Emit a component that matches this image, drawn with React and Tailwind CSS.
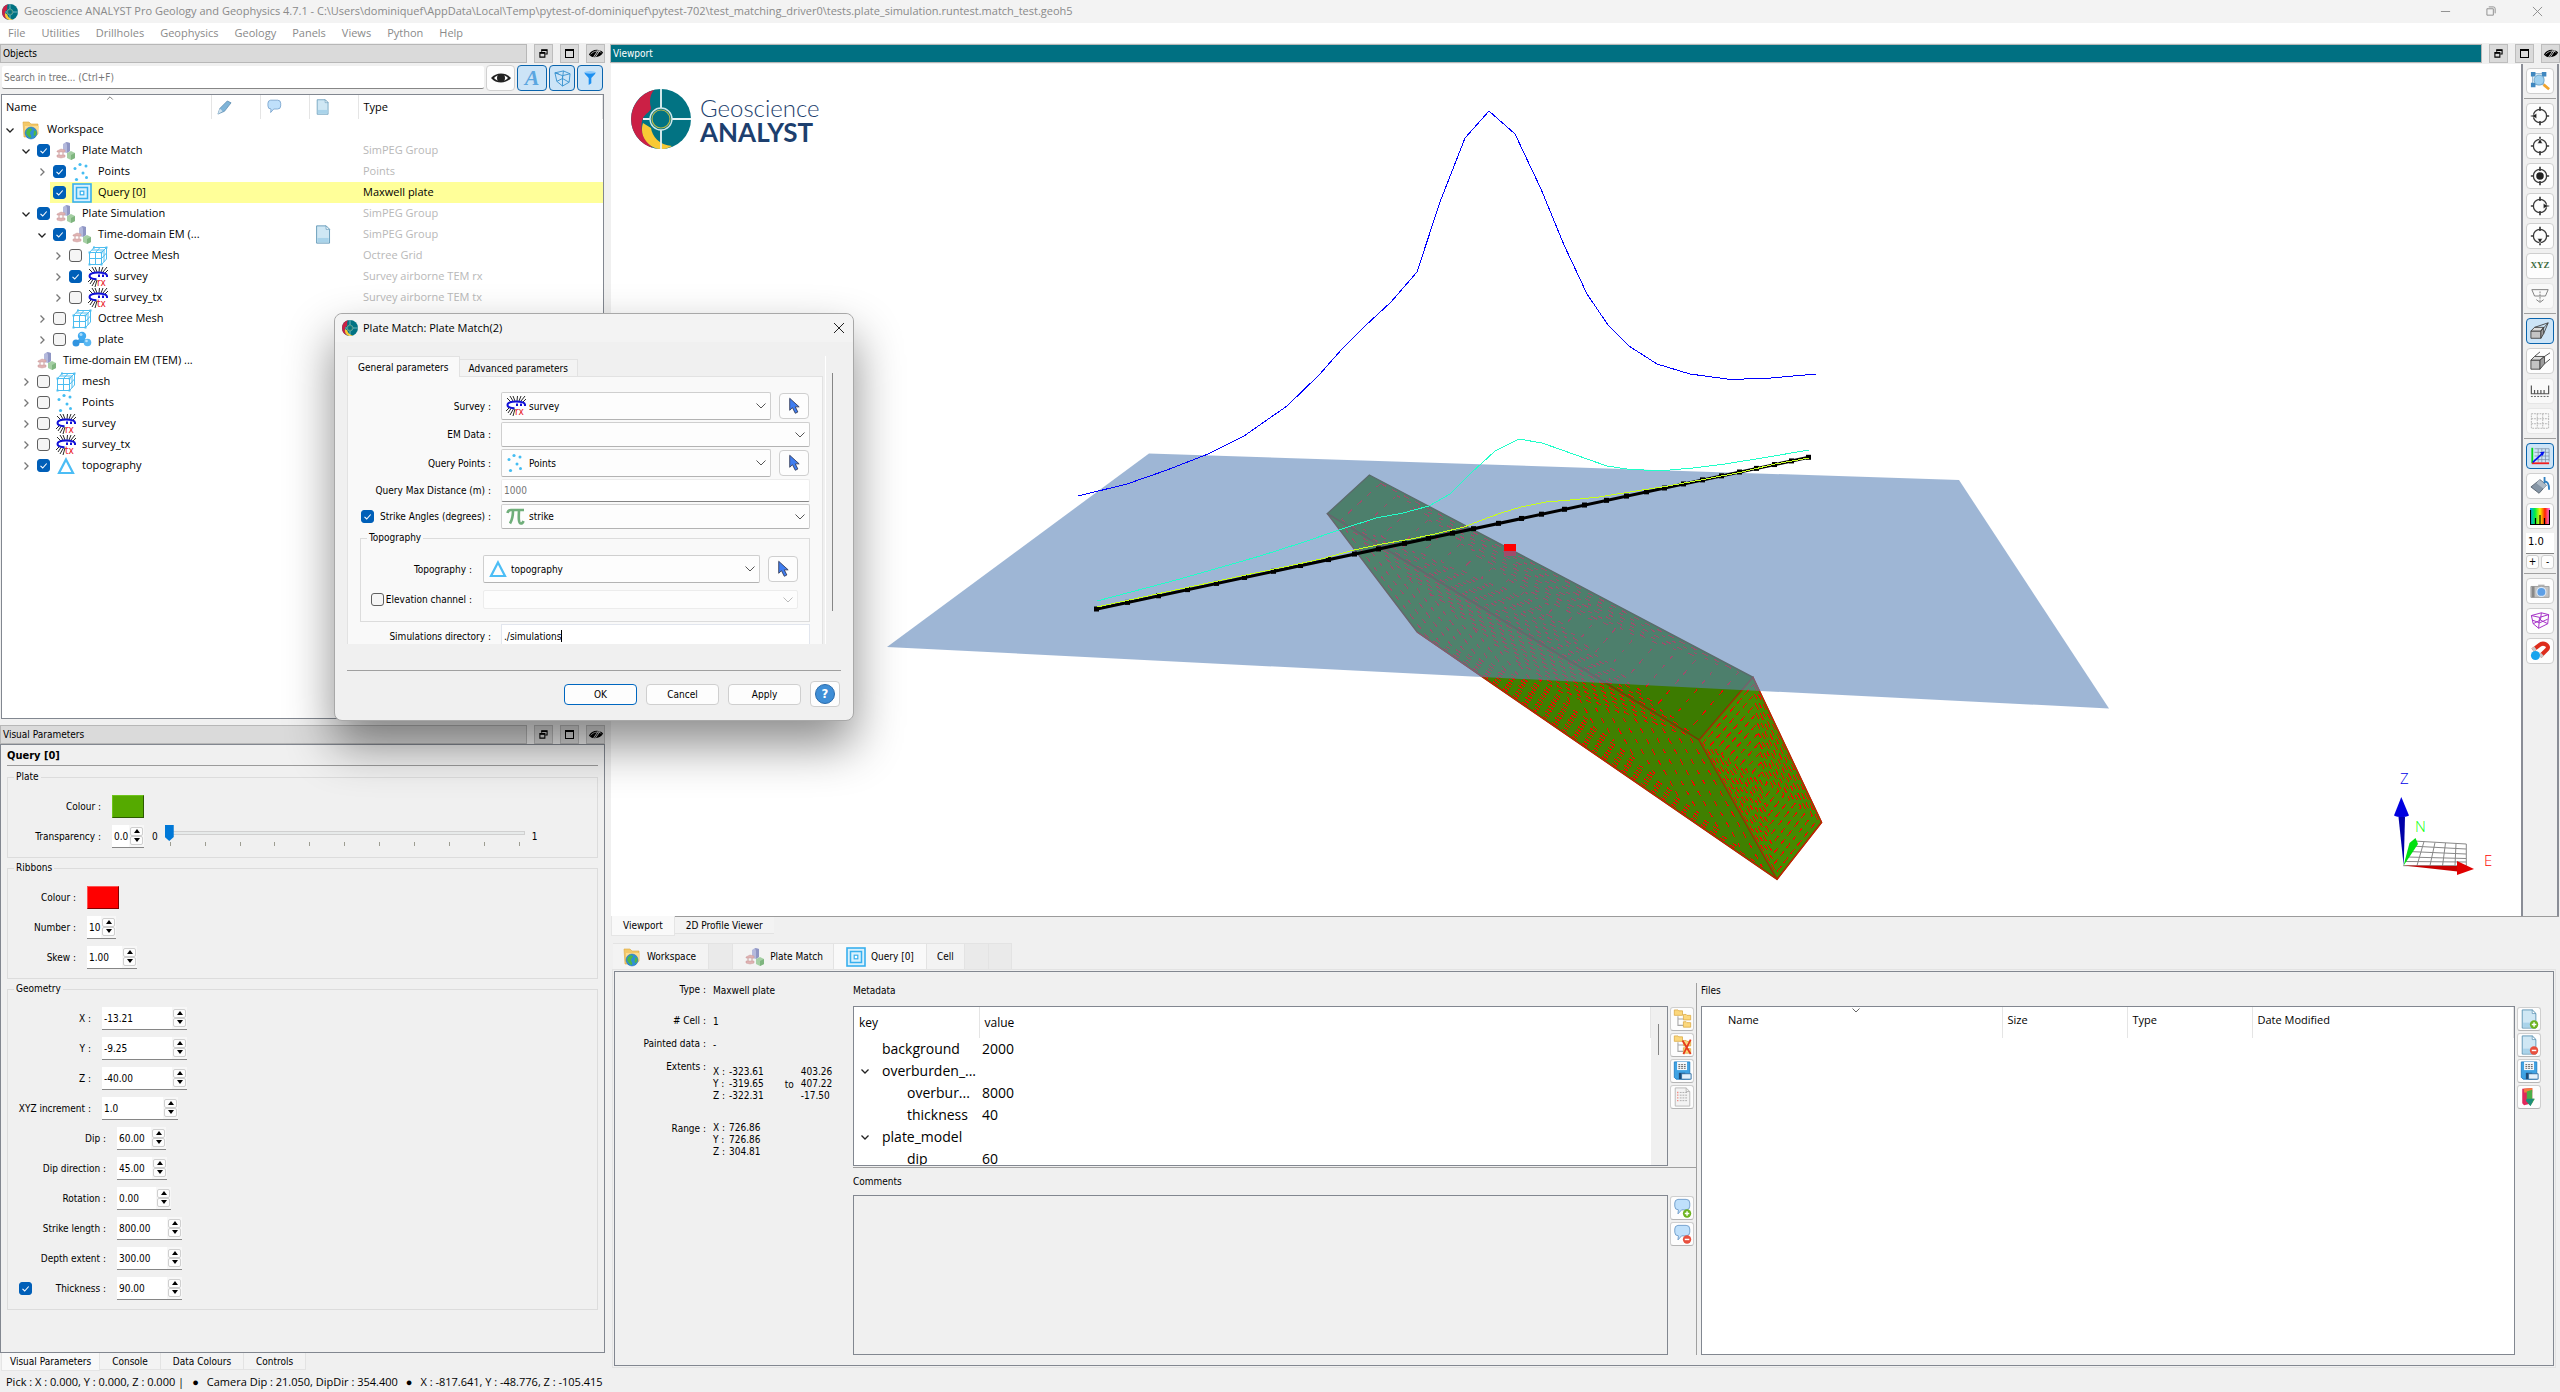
import clsx from "clsx";

const segoe = "font-['Open_Sans','Noto_Sans',sans-serif]";
const tahoma = "font-['DejaVu_Sans_Condensed','DejaVu_Sans',sans-serif]";

/* ---------- icons ---------- */

const AppLogo = ({ className }) => (
  <svg viewBox="0 0 60 60" className={className}>
    <circle cx="30" cy="30" r="30" fill="#027383" />
    <path d="M23 1A30 30 0 0 0 22 59C12 50 8 40 12 29 14 25 20 22 20 19 18 12 19 6 23 1Z" fill="#cb2045" />
    <path d="M12 34C8 46 16 56 24 59 30 61 36 60 41 57 28 56 21 47 20 39Z" fill="#f9c935" />
    <path d="M30 0V19M30 41V60M41 30H60M12 30H19" stroke="#e8f4f5" strokeWidth="1.8" />
    <circle cx="30" cy="30" r="11" fill="none" stroke="#cfe8ea" strokeWidth="1.4" />
    <circle cx="30" cy="30" r="9" fill="#027383" stroke="#b6b74a" strokeWidth="1.2" />
  </svg>
);

const WorkspaceIcon = () => (
  <svg viewBox="0 0 20 20" className="size-5">
    <path d="M2 2h6l2 2h7v10l-3 3H3z" fill="#f3c868" stroke="#dba83f" strokeWidth=".6" />
    <path d="M4 6h14l-2 10H4z" fill="#fbdc92" />
    <circle cx="10" cy="13" r="6" fill="#2f8fd6" stroke="#1d6cab" strokeWidth=".5" />
    <path d="M6 10c2-2 4-2 5-1 0 2-2 2-2 4s2 2 1 5c-2 0-4-3-5-5zM13 11c1-1 2 0 2.500 1 0 2-1 4-2.500 4-1-2 0-3 0-5z" fill="#4db748" />
  </svg>
);

const SimpegIcon = () => (
  <svg viewBox="0 0 20 20" className="size-5">
    <path d="M7 3l3-2 4 1v8l-3 2-4-1z" fill="#b4b9dc" />
    <path d="M10 1l4 1v8l-3 2V4z" fill="#8f96c4" />
    <path d="M1 10l4-2 4 1v2H1zM1 14h8v2l-4 1-4-1z" fill="#e0b3b3" stroke="#c99a9a" strokeWidth=".5" />
    <path d="M3 11v3M7 11v3" stroke="#c99a9a" />
    <path d="M11 12l4-2 4 2v5l-4 2-4-2z" fill="#a5cfa4" />
    <path d="M15 14l4-2v5l-4 2z" fill="#7fb57f" />
  </svg>
);

const PointsIcon = () => (
  <svg viewBox="0 0 20 20" className="size-5" fill="#45bdf2">
    <circle cx="8" cy="2.500" r="1.600" />
    <circle cx="14" cy="4" r="1.500" />
    <circle cx="3" cy="6.500" r="1.500" />
    <circle cx="11" cy="11" r="1.500" />
    <circle cx="14.500" cy="15.500" r="1.500" />
    <circle cx="4.500" cy="17.500" r="1.600" />
  </svg>
);

const PlateIcon = () => (
  <svg viewBox="0 0 20 20" className="size-5" fill="none">
    <rect x="1" y="1" width="18" height="18" fill="#d9f1fd" stroke="#38b0ee" strokeWidth="1.600" />
    <rect x="4.500" y="4.500" width="11" height="11" stroke="#38b0ee" strokeWidth="1.500" />
    <rect x="8.200" y="8.200" width="3.600" height="3.600" fill="#fff" stroke="#38b0ee" strokeWidth="1.200" />
  </svg>
);

const OctreeIcon = () => (
  <svg viewBox="0 0 20 20" className="size-5" fill="none" stroke="#4cbdf0" strokeWidth="1">
    <path d="M1.500 6.500h12v12h-12zM6 1.500h12.500l-5 5M1.500 6.500l4.500-5M18.500 1.500v11.500l-5 5.500M7.500 6.500v12M1.500 12.500h12l5-5.500M12 1.500l-4.500 5M16 4v12M4 4h12" />
    <path d="M.5 5.500h2v2h-2zM12.500 5.500h2v2h-2zM.5 17.500h2v2h-2zM12.500 17.500h2v2h-2zM17.500 .5h2v2h-2zM5 .5h2v2H5z" fill="#4cbdf0" stroke="none" />
  </svg>
);

const SurveyIcon = ({ tag }) => (
  <svg viewBox="0 0 20 20" className="size-5" fill="none">
    <path d="M7 5L4 0M9 5L7 0M11 5l.5-5M13 5l2-5M15 5l4-5M17 6l3-3M5 6L1 2M6 11l-4 6M8 12l-4 7M9 13l-2 7M4 11l-4 4" stroke="#111" strokeWidth=".9" />
    <path d="M19 10V8.500C18.500 6.500 15 5.500 10 5.500S1.500 6.500 1.500 9s3 3 7 3.200M11 7.500v2.500M15 7.500v2.500" stroke="#1010d8" strokeWidth="2" />
    <text x="9" y="19" fontSize="10" fill="#e8141c" fontFamily="DejaVu Sans Condensed">{tag}</text>
  </svg>
);

const BlobIcon = () => (
  <svg viewBox="0 0 20 20" className="size-5">
    <path d="M3 13l7-7 6 7z" fill="#3d9fe2" />
    <circle cx="10" cy="6" r="4.200" fill="#41aaf0" />
    <circle cx="4" cy="13" r="3.500" fill="#3194e0" />
    <circle cx="15.500" cy="12.500" r="3.800" fill="#58b7f3" />
    <circle cx="9" cy="4.500" r="1.500" fill="#a6dbfb" />
    <circle cx="14.500" cy="11" r="1.300" fill="#b8e3fc" />
  </svg>
);

const TriangleIcon = () => (
  <svg viewBox="0 0 20 20" className="size-5" fill="none">
    <path d="M10 3.500L17 17H3z" stroke="#4cbdf5" strokeWidth="2.200" />
  </svg>
);

const PiIcon = () => (
  <svg viewBox="0 0 20 20" className="size-5" fill="none" stroke="#6fae7a">
    <path d="M1.500 6C2 3.500 3 3 5 3h13" strokeWidth="2.600" />
    <path d="M7 3.500c0 5-.5 9-3 13M13 3.500c-.3 6-.8 13 2 13 1.500 0 2-1 2.500-2.500" strokeWidth="2.600" />
  </svg>
);

const icons = {
  workspace: <WorkspaceIcon />,
  simpeg: <SimpegIcon />,
  points: <PointsIcon />,
  plate: <PlateIcon />,
  octree: <OctreeIcon />,
  rx: <SurveyIcon tag="rx" />,
  tx: <SurveyIcon tag="tx" />,
  blob: <BlobIcon />,
  triangle: <TriangleIcon />,
  pi: <PiIcon />,
};

const Chevron = ({ open, className }) => (
  <svg viewBox="0 0 10 10" className={clsx("size-[10px]", className)} fill="none">
    <path d={open ? "M1.500 3.500L5 7l3.500-3.500" : "M3.500 1.500L7 5 3.500 8.500"} stroke={open ? "#222" : "#777"} strokeWidth="1.300" />
  </svg>
);

const DocIcon = ({ badge, className }) => (
  <svg viewBox="0 0 20 22" className={className}>
    <path d="M2 1h11l4 4v16H2z" fill="#cfe7f4" stroke="#5b93b4" strokeWidth="1" />
    <path d="M3 15h13v5H3z" fill="#a9d3ea" />
    <path d="M13 1v4h4z" fill="#fff" stroke="#5b93b4" strokeWidth=".8" />
    {badge && <Badge kind={badge} />}
  </svg>
);

const CommentIcon = ({ badge, className }) => (
  <svg viewBox="0 0 20 22" className={className}>
    <path d="M5 1.500h9a4 4 0 0 1 4 4V9a4 4 0 0 1-4 4H9l-4 4.500.5-4.500A4 4 0 0 1 1.500 9V5.500a4 4 0 0 1 3.500-4z" fill="#bfe0fb" stroke="#6e9cc9" strokeWidth="1" />
    {badge && <Badge kind={badge} />}
  </svg>
);

const Badge = ({ kind }) => (
  <g>
    <circle cx="15" cy="17" r="4.600" fill={kind === "add" ? "#6db31f" : "#e8503e"} />
    <path d={kind === "add" ? "M12.500 17h5M15 14.500v5" : "M12.500 17h5"} stroke="#fff" strokeWidth="1.600" />
  </g>
);

const SaveIcon = () => (
  <svg viewBox="0 0 20 22" className="h-[20px] w-[19px]">
    <path d="M1 1h17v19H3l-2-2z" fill="#3fa3e4" stroke="#2380c4" />
    <path d="M4 1h11v9H4z" fill="#f5f9fc" />
    <path d="M5.500 4h8M5.500 6h8M5.500 8h8" stroke="#555" strokeDasharray="2 1" />
    <path d="M6 13h7v7H6z" fill="#1f4c77" />
    <path d="M9 14h10.500v6H9z" fill="#e4f1fb" stroke="#2f6fa5" />
  </svg>
);

const FolderTreeIcon = ({ removed }) => (
  <svg viewBox="0 0 20 22" className="h-[20px] w-[19px]" fill="#fbd77c" stroke="#d9a53c" strokeWidth=".8">
    <path d="M5 8v10h6M5 11h6" fill="none" stroke="#a8a8a8" strokeWidth="1.200" />
    <path d="M1 1h4l1 1h4v5H1zM11 6h3l1 1h4v5h-8zM11 14h3l1 1h4v5h-8z" />
    {removed && <path d="M10 6l9 15M19 5l-8 16" fill="none" stroke="#e63a1e" strokeWidth="2" />}
  </svg>
);

const NotesIcon = () => (
  <svg viewBox="0 0 20 22" className="h-[20px] w-[19px]" fill="none">
    <path d="M2 1h12l4 4v16H2z" fill="#f3f3f3" stroke="#b5b5b5" />
    <path d="M14 1v4h4" stroke="#b5b5b5" />
    <path d="M7 6h8M7 9h8M7 12h8M7 15h8" stroke="#a8a8a8" strokeDasharray="2 1" />
    <path d="M4 6h1.500M4 9h1.500M4 12h1.500M4 15h1.500" stroke="#f08a80" strokeWidth="1.500" />
  </svg>
);

const ImportIcon = () => (
  <svg viewBox="0 0 20 22" className="h-[20px] w-[19px]">
    <path d="M2 2l11-1v17L4 20 2 18z" fill="#e0285c" />
    <path d="M4 2l9-1v5H4z" fill="#f47b3c" />
    <path d="M7 5l6-2v10h3l-5 8-5-7h1z" fill="#4caf45" />
    <path d="M7 13h8l-4 8-5-6z" fill="#1c8d7b" />
  </svg>
);

const PickIcon = () => (
  <svg viewBox="0 0 14 20" className="h-[18px] w-[12px]">
    <path d="M2 1v14l3.200-3L8.500 18.500l3-1.500L8.500 11h4.500z" fill="#3f7df0" stroke="#333a55" strokeWidth="1" />
  </svg>
);

const Restore = () => (
  <svg viewBox="0 0 10 10" className="size-[9px]" fill="none" stroke="#000">
    <path d="M3 3V1h6v4.500H7" strokeWidth="1.200" />
    <path d="M1 4h5.500v5H1z" strokeWidth="1.200" />
    <path d="M3 1.500h6M1 4.500h5.500" strokeWidth="1.600" />
  </svg>
);

const EyeOff = () => (
  <svg viewBox="0 0 18 12" className="h-[11px] w-[16px]">
    <path d="M1 7C4 1 13 0 17 5 14 11 5 12 1 7z" fill="#000" />
    <path d="M3 7C6 3 12 2 15 5" stroke="#ddd" strokeWidth=".8" fill="none" />
    <path d="M5 12L13 0M7 12L15 0" stroke="#dadada" strokeWidth="1" />
  </svg>
);

/* ---------- shared controls ---------- */

const DockHeader = ({ title, active }) => (
  <div className="flex h-[19px] gap-[7px]">
    <div
      className={clsx(
        "flex flex-1 items-center border border-[#b7b7b7] pl-[2px] text-[10px]",
        active ? "bg-[#007082] text-white" : "bg-[#dadada] text-black"
      )}
    >
      {title}
    </div>
    {[<Restore />, <span className="size-[9px] border border-t-2 border-black" />, <EyeOff />].map((icon, i) => (
      <button key={i} aria-label={["Float", "Maximize", "Hide"][i]} className="flex w-[19px] items-center justify-center border border-[#bdbdbd] bg-[#dadada]">
        {icon}
      </button>
    ))}
  </div>
);

const Check = ({ checked, label, id }) => (
  <span className="relative block size-[13px] shrink-0">
    <input
      id={id}
      type="checkbox"
      defaultChecked={checked}
      aria-label={label}
      className="peer block size-[13px] appearance-none rounded-[3px] border border-[#5f5f5f] bg-[#f5f5f5] checked:border-[#005fb8] checked:bg-[#005fb8]"
    />
    <svg viewBox="0 0 13 13" className="pointer-events-none absolute inset-0 hidden peer-checked:block" fill="none">
      <path d="M3.500 6.800L5.700 9l4-4.500" stroke="#fff" strokeWidth="1.100" />
    </svg>
  </span>
);

const Spin = ({ id, value, width }) => (
  <div className={clsx("flex h-[23px] items-center border-b border-[#868686] bg-[#f7f7f7]", width)}>
    <input id={id} defaultValue={value} className="h-full min-w-0 flex-1 bg-white pt-px pl-[2px] text-[10px] outline-none" />
    <div className="flex w-[15px] flex-col px-px">
      {["M3 0L6 4H0z", "M0 0h6L3 4z"].map((d, i) => (
        <button key={i} aria-label={i ? "Decrease" : "Increase"} className="flex h-[9px] items-center justify-center rounded-[2px] border border-[#cfcfcf] bg-[#fdfdfd]">
          <svg viewBox="0 0 6 4" className="h-[4px] w-[6px]">
            <path d={d} />
          </svg>
        </button>
      ))}
    </div>
  </div>
);

const Group = ({ title, className, children }) => (
  <fieldset className={clsx("border border-[#dcdcdc]", className)}>
    <legend className="ml-[6px] h-[14px] px-[2px] text-[10px] leading-[14px]">{title}</legend>
    {children}
  </fieldset>
);

const Combo = ({ id, value, icon, disabled, className }) => (
  <div
    className={clsx(
      "flex items-center rounded-[2px] border bg-[#fdfdfd] pl-1",
      disabled ? "border-[#ececec]" : "border-[#cfcfcf] border-b-[#b3b3b3]",
      className
    )}
  >
    {icon && icons[icon]}
    <select id={id} disabled={disabled} className="h-full min-w-0 flex-1 appearance-none bg-transparent pl-[3px] text-[10px] outline-none">
      <option>{value}</option>
    </select>
    <svg viewBox="0 0 10 6" className="mr-1 h-[6px] w-[10px]" fill="none">
      <path d="M.5 .5L5 5 9.500 .5" stroke={disabled ? "#bbb" : "#555"} />
    </svg>
  </div>
);

const PickButton = () => (
  <button aria-label="Pick from viewport" className="flex h-[26px] w-[30px] items-center justify-center rounded border border-[#cfcfcf] bg-[#fdfdfd]">
    <PickIcon />
  </button>
);

const SideButton = ({ label, children }) => (
  <button aria-label={label} className="flex size-6 items-center justify-center rounded-[3px] border border-[#cfcfcf] border-b-[#b5b5b5] bg-[#fdfdfd]">
    {children}
  </button>
);

/* ---------- objects tree ---------- */

const tree = [
  { level: 0, open: true, icon: "workspace", name: "Workspace" },
  { level: 1, open: true, checked: true, icon: "simpeg", name: "Plate Match", type: "SimPEG Group" },
  { level: 2, open: false, checked: true, icon: "points", name: "Points", type: "Points" },
  { level: 2, checked: true, icon: "plate", name: "Query [0]", type: "Maxwell plate", selected: true },
  { level: 1, open: true, checked: true, icon: "simpeg", name: "Plate Simulation", type: "SimPEG Group" },
  { level: 2, open: true, checked: true, icon: "simpeg", name: "Time-domain EM (...", type: "SimPEG Group", doc: true },
  { level: 3, open: false, checked: false, icon: "octree", name: "Octree Mesh", type: "Octree Grid" },
  { level: 3, open: false, checked: true, icon: "rx", name: "survey", type: "Survey airborne TEM rx" },
  { level: 3, open: false, checked: false, icon: "tx", name: "survey_tx", type: "Survey airborne TEM tx" },
  { level: 2, open: false, checked: false, icon: "octree", name: "Octree Mesh" },
  { level: 2, open: false, checked: false, icon: "blob", name: "plate" },
  { level: 1, icon: "simpeg", name: "Time-domain EM (TEM) ..." },
  { level: 1, open: false, checked: false, icon: "octree", name: "mesh" },
  { level: 1, open: false, checked: false, icon: "points", name: "Points" },
  { level: 1, open: false, checked: false, icon: "rx", name: "survey" },
  { level: 1, open: false, checked: false, icon: "tx", name: "survey_tx" },
  { level: 1, open: false, checked: true, icon: "triangle", name: "topography" },
];

const indents = ["pl-0", "pl-4", "pl-8", "pl-12"];

const TreeRow = ({ row }) => (
  <tr className="h-[21px]">
    <td className={clsx("p-0", indents[row.level])}>
      <div className={clsx("flex h-[21px] items-center pl-[3px] whitespace-nowrap", row.selected && "ml-4 bg-[#ffff99]")}>
        {!row.selected && (
          <button aria-label="Expand" className="flex w-4 shrink-0 items-center">
            {row.open !== undefined && <Chevron open={row.open} />}
          </button>
        )}
        {row.checked !== undefined && (
          <span className="mr-[6px]">
            <Check checked={row.checked} label={row.name} />
          </span>
        )}
        {icons[row.icon]}
        <span className="ml-[6px]">{row.name}</span>
      </div>
    </td>
    <td className={clsx("p-0", row.selected && "bg-[#ffff99]")} />
    <td className={clsx("p-0", row.selected && "bg-[#ffff99]")} />
    <td className={clsx("p-0 pl-[5px]", row.selected && "bg-[#ffff99]")}>{row.doc && <DocIcon className="h-[19px] w-[19px]" />}</td>
    <td className={clsx("p-0 pl-[5px]", row.selected ? "bg-[#ffff99]" : "text-[#b8b8b8]")}>{row.type}</td>
  </tr>
);

const toggleStyle = "flex items-center justify-center rounded border border-[#0a64ad] bg-[#cce4f7]";

const ObjectsPanel = () => (
  <section className="flex min-h-0 flex-1 flex-col">
    <DockHeader title="Objects" />
    <div className="flex h-[28px] gap-[2px] px-[2px] pt-[2px]">
      <input
        aria-label="Search in tree"
        placeholder="Search in tree... (Ctrl+F)"
        className="mt-px h-[23px] min-w-0 flex-1 rounded-[2px] border-b border-[#868686] bg-white px-[2px] text-[10px] outline-none placeholder:text-[#757575]"
      />
      <button aria-label="Show visible" className="flex w-[29px] items-center justify-center rounded border border-[#d0d0d0] bg-[#fdfdfd]">
        <svg viewBox="0 0 20 12" className="h-[12px] w-[20px]">
          <path d="M0 6C5 0 15 0 20 6 15 12 5 12 0 6z" fill="#222" />
          <path d="M3 6c3-4 11-4 14 0-3 4-11 4-14 0z" fill="#fff" />
          <circle cx="10" cy="6" r="4" fill="#222" />
        </svg>
      </button>
      <button aria-label="Text" className={clsx(toggleStyle, "w-[30px]")}>
        <span className="font-['Liberation_Serif',serif] text-[22px] leading-5 font-bold text-[#5ba6e0] italic">A</span>
      </button>
      <button aria-label="Objects" className={clsx(toggleStyle, "w-[26px]")}>
        <svg viewBox="0 0 18 18" className="size-[17px]" fill="none" stroke="#3d94cf">
          <path d="M1 3l9-2 7 3-1 9-7 4-6-5zM1 3l8 3 8-2M9 6v11M1 3l4 1M3 12l6-3 7 4M10 1l-1 8" />
        </svg>
      </button>
      <button aria-label="Filter" className={clsx(toggleStyle, "w-[26px]")}>
        <svg viewBox="0 0 16 18" className="h-[16px] w-[14px]">
          <path d="M2 2h12v2L9.500 9v6l-3 2V9L2 4z" fill="#1c8ff0" />
          <ellipse cx="8" cy="2.500" rx="6.500" ry="1.500" fill="#8cc9fa" />
        </svg>
      </button>
    </div>
    <div className={clsx("mt-[3px] mr-px ml-px flex-1 border border-[#828790] bg-white text-[11px]", segoe)}>
      <table className="w-full table-fixed border-collapse">
        <colgroup>
          <col className="w-[209px]" />
          <col className="w-[49px]" />
          <col className="w-[49px]" />
          <col className="w-[49px]" />
          <col />
        </colgroup>
        <thead>
          <tr className="h-6 text-left">
            <th className="relative border-r border-[#e5e5e5] p-0 pl-[4px] font-normal">
              Name
              <svg viewBox="0 0 8 5" className="absolute top-px left-1/2 h-[4px] w-[8px]" fill="none">
                <path d="M.5 4.500L4 1l3.500 3.500" stroke="#666" />
              </svg>
            </th>
            <th className="border-r border-[#e5e5e5] p-0 pl-[5px]">
              <svg viewBox="0 0 16 16" className="size-[15px]">
                <path d="M1 15l2-6 8-8 4 2-7 9z" fill="#7fb4d8" stroke="#4e7fa5" strokeWidth=".7" />
                <path d="M1 15l2-6 3 3z" fill="#cfe2ef" />
              </svg>
            </th>
            <th className="border-r border-[#e5e5e5] p-0 pl-[5px]">
              <CommentIcon className="h-[17px] w-[17px]" />
            </th>
            <th className="border-r border-[#e5e5e5] p-0 pl-[5px]">
              <DocIcon className="h-[16px] w-[16px]" />
            </th>
            <th className="border-r border-[#e5e5e5] p-0 pl-[5px] font-normal">Type</th>
          </tr>
        </thead>
        <tbody>
          {tree.map((row, i) => (
            <TreeRow key={i} row={row} />
          ))}
        </tbody>
      </table>
    </div>
  </section>
);

/* ---------- visual parameters ---------- */

const geometry = [
  ["X", "-13.21", "w-[85px]"],
  ["Y", "-9.25", "w-[85px]"],
  ["Z", "-40.00", "w-[85px]"],
  ["XYZ increment", "1.0", "w-[76px]"],
  ["Dip", "60.00", "w-[49px]"],
  ["Dip direction", "45.00", "w-[50px]"],
  ["Rotation", "0.00", "w-[54px]"],
  ["Strike length", "800.00", "w-[65px]"],
  ["Depth extent", "300.00", "w-[65px]"],
  ["Thickness", "90.00", "w-[65px]"],
];

const Param = ({ label, id, labelWidth, children }) => (
  <div className="flex h-6 items-center gap-[11px]">
    <label htmlFor={id} className={clsx("text-right", labelWidth)}>
      {label} :
    </label>
    {children}
  </div>
);

const VisualParameters = () => (
  <section>
    <DockHeader title="Visual Parameters" />
    <div className="border border-[#828790] px-[6px] pb-[42px] text-[10px]">
      <h2 className="mt-[3px] flex h-[18px] items-center border-b border-[#9b9b9b] text-[11px] font-bold">Query [0]</h2>
      <Group title="Plate" className="mt-1 flex flex-col gap-[6px] pt-[10px] pb-[9px]">
        <Param label="Colour" id="plate-colour" labelWidth="w-[93px]">
          <button id="plate-colour" aria-label="Plate colour" className="h-[23px] w-8 border border-t-[#6fc41c] border-r-[#2c5a00] border-b-[#2c5a00] border-l-[#6fc41c] bg-[#55aa00]" />
        </Param>
        <Param label="Transparency" id="transparency" labelWidth="w-[93px]">
          <Spin id="transparency" value="0.0" width="w-8" />
          <span className="-ml-[3px]">0</span>
          <div className="relative -ml-1 h-6 w-[360px]">
            <div className="mt-[7px] h-[4px] border border-[#d0d0d0] bg-[#e7eaea]" />
            <input
              type="range"
              min="0"
              max="1"
              step="0.1"
              defaultValue="0"
              aria-label="Transparency slider"
              className="absolute inset-x-0 top-0 h-[18px] appearance-none bg-transparent [&::-webkit-slider-thumb]:h-4 [&::-webkit-slider-thumb]:w-[9px] [&::-webkit-slider-thumb]:appearance-none [&::-webkit-slider-thumb]:bg-[#0078d7] [&::-webkit-slider-thumb]:[clip-path:polygon(0_0,100%_0,100%_75%,50%_100%,0_75%)]"
            />
            <div className="mt-[7px] flex justify-between px-[5px]">
              {Array.from({ length: 11 }, (_, i) => (
                <span key={i} className="h-[4px] w-px bg-[#9d9d92]" />
              ))}
            </div>
          </div>
          <span className="-ml-1">1</span>
        </Param>
      </Group>
      <Group title="Ribbons" className="mt-[3px] flex flex-col gap-[6px] pt-[10px] pb-[9px]">
        <Param label="Colour" id="ribbon-colour" labelWidth="w-[68px]">
          <button id="ribbon-colour" aria-label="Ribbon colour" className="h-[23px] w-8 border border-t-[#ff5050] border-r-[#800000] border-b-[#800000] border-l-[#ff5050] bg-[#ff0000]" />
        </Param>
        <Param label="Number" id="number" labelWidth="w-[68px]">
          <Spin id="number" value="10" width="w-[29px]" />
        </Param>
        <Param label="Skew" id="skew" labelWidth="w-[68px]">
          <Spin id="skew" value="1.00" width="w-[50px]" />
        </Param>
      </Group>
      <Group title="Geometry" className="mt-[3px] flex flex-col gap-[6px] pt-[10px] pb-[9px]">
        {geometry.map(([label, value, width], i) =>
          label === "Thickness" ? (
            <div key={label} className="flex items-center pl-[11px]">
              <Check checked label="Use thickness" />
              <Param label={label} id="geo-9" labelWidth="w-[74px]">
                <Spin id="geo-9" value={value} width={width} />
              </Param>
            </div>
          ) : (
            <Param key={label} label={label} id={`geo-${i}`} labelWidth={i < 4 ? "w-[83px]" : "w-[98px]"}>
              <Spin id={`geo-${i}`} value={value} width={width} />
            </Param>
          )
        )}
      </Group>
    </div>
    <div className="flex h-[19px] items-start pl-px text-[10px]">
      <button className="h-[18px] border border-t-0 border-[#e5e5e5] bg-[#f9f9f9] px-2">Visual Parameters</button>
      {["Console", "Data Colours", "Controls"].map((t) => (
        <button key={t} className="h-[17px] border-r border-b border-[#e3e3e3] bg-[#f3f3f3] px-3">
          {t}
        </button>
      ))}
    </div>
  </section>
);

/* ---------- 3D viewport ---------- */

const A = [1369.4, 475];
const B = [1327.3, 513.7];
const C = [1417.1, 632];
const D = [1777.1, 879.3];
const E = [1821.6, 822.3];
const F = [1753, 677.3];
const G = [1699.2, 740];

const faces = [
  { pts: [A, F, G, B], fill: "#3c7b00", edge: "#5a4a00", dash: ["6 7", "4 8"] },
  { pts: [B, G, D, C], fill: "#408000", edge: "#7a3a00", dash: ["6 6", "5 7"] },
  { pts: [F, E, D, G], fill: "#458a00", edge: "#a03000", dash: ["7 4", "6 4"] },
];

const path = (pts) => pts.map((p) => p.join(",")).join(" ");

// nested outlines shrinking towards the centre of a face
const ribbons = (pts) => {
  const cx = pts.reduce((s, p) => s + p[0], 0) / 4;
  const cy = pts.reduce((s, p) => s + p[1], 0) / 4;
  return Array.from({ length: 10 }, (_, i) => {
    const k = 1 - (i + 0.7) / 10.5;
    return path(pts.map(([x, y]) => [cx + (x - cx) * k, cy + (y - cy) * k]));
  });
};

const stations = [
  1097, 1128, 1159, 1188, 1217, 1245, 1274, 1301, 1329, 1355, 1379, 1405, 1429, 1453, 1474, 1499, 1522, 1542, 1565,
  1585, 1607, 1627, 1647, 1665, 1684, 1703, 1722, 1740, 1757, 1775, 1792, 1809,
];
const lineY = (x) => 609 - ((x - 1097) / 712) * 151.7;

const blueLine =
  "1078,496 1127,484 1167,470 1208,454 1244,436 1287,406 1319,375 1342,349 1365,326 1391,302 1417,272 1440,202 1465,138 1489,111 1515,134 1541,189 1564,245 1587,294 1608,325 1629,346 1657,364 1690,374 1731,379.500 1771,378 1816,374";
const cyanLine =
  "1097,601 1180,579 1260,556 1301,543 1342,529 1376,518 1403,513 1429,506 1450,494 1472,472 1482,463 1495,451 1507,445 1519,439 1542,443 1562,450 1587,459 1607,466 1627,469 1644,470 1670,470 1693,468 1725,464 1762,458 1809,450";
const yellowLine =
  "1097,607 1180,589 1260,572 1284,567 1321,559 1354,550 1382,544 1411,539 1435,534 1464,527 1482,520 1501,513 1521,507 1546,502 1570,500 1599,497 1636,491 1668,486 1701,480 1742,472 1775,464 1809,458";

const Scene = () => (
  <svg viewBox="611 64 1910 852" preserveAspectRatio="xMinYMin slice" className="absolute inset-0 h-full w-full">
    {faces.map(({ pts, fill, edge, dash }, i) => (
      <g key={i}>
        <polygon points={path(pts)} fill={fill} />
        {ribbons(pts).map((r, j) => (
          <polygon key={j} points={r} fill="none" stroke="#ff0000" strokeWidth="1" strokeDasharray={dash[j % 2]} shapeRendering="crispEdges" />
        ))}
        <polygon points={path(pts)} fill="none" stroke={edge} strokeWidth="1.400" />
      </g>
    ))}
    <polyline points={path([F, E, D, C])} fill="none" stroke="#c42000" strokeWidth="1.200" />
    <rect x="1504" y="544" width="12" height="12" fill="#ff0000" />
    <polygon points="1149,453.500 1959,480 2109,708.500 887,647" fill="#5a83b8" fillOpacity=".59" />
    <rect x="1504" y="544" width="12" height="7" fill="#ff0000" />
    <polyline points={cyanLine} fill="none" stroke="#20ffc8" strokeWidth="1" shapeRendering="crispEdges" />
    <line x1="1097" y1="609" x2="1809" y2="457.300" stroke="#000" strokeWidth="3" />
    {stations.map((x) => (
      <rect key={x} x={x - 3} y={lineY(x) - 2.5} width="5" height="5" />
    ))}
    <polyline points={yellowLine} fill="none" stroke="#c8ff1e" strokeWidth="1" shapeRendering="crispEdges" />
    <polyline points={blueLine} fill="none" stroke="#0000ff" strokeWidth="1" shapeRendering="crispEdges" />

    <g transform="translate(2340 740)">
      <path
        d="M73.300 101L126.300 104V125.700H63.300M71 106l55 3M69 111.500l57 2.500M67 117l59 1.500M65 121.500l61 .5M84 101.500l-7 24M95 102.500l-5 23M105.500 103l-3 23M116 103.500l-1 22"
        fill="none"
        stroke="#888"
      />
      <path d="M63.500 125.700L69.500 103l6-5 2.500 6z" fill="#00e010" />
      <path d="M63.700 125.700L58.500 77h6.500z" fill="#0000a8" />
      <path d="M54 75.500L61.300 57 69 75.500c-4 2-11 2-15 0z" fill="#0000e0" />
      <path d="M63.500 125.500l54 .5v5.500z" fill="#c80000" />
      <path d="M117 121l17 8-17 6z" fill="#e00000" />
      <g fontFamily="Open Sans" fontSize="15" fontWeight="300">
        <text x="60" y="44" fill="#0000e8">Z</text>
        <text x="75" y="92" fill="#10ff10">N</text>
        <text x="144" y="126" fill="#ff0000">E</text>
      </g>
    </g>
  </svg>
);

const Brand = () => (
  <div className="absolute top-[25px] left-5 flex items-center gap-[9px] text-[#1d3f6e]">
    <AppLogo className="size-[60px]" />
    <div className="font-['Lato','Open_Sans',sans-serif]">
      <div className="text-[24px] leading-[26px] font-light">Geoscience</div>
      <div className="text-[26px] leading-[22px] font-bold">ANALYST</div>
    </div>
  </div>
);

const targetMarks = {
  left: "M1 12l7-3v6z",
  up: "M12 3l-3 6h6z",
  right: "M23 12l-7-3v6z",
  down: "M12 21l-3-6h6z",
};

const TargetIcon = ({ dir }) => (
  <svg viewBox="0 0 24 24" className="size-5" fill="none" stroke="#3a3a3a">
    <circle cx="12" cy="12" r="8" strokeWidth="1.500" />
    <path d="M12 1v5M12 18v5M1 12h4M19 12h4" strokeWidth="2" />
    {dir ? (
      <path d={targetMarks[dir]} fill="#222" stroke="#fff" strokeWidth=".6" />
    ) : (
      <circle cx="12" cy="12" r="4.500" fill="#222" stroke="none" />
    )}
  </svg>
);

const CubeIcon = ({ perspective }) => (
  <svg viewBox="0 0 22 22" className="size-5" stroke="#444" fill="#c4c4c4">
    {perspective ? (
      <>
        <path d="M1 11h11v8H1z" />
        <path d="M1 11l4-4h10l-3 4z" fill="#dcdcdc" />
        <path d="M12 11l3-4v7l-3 5z" fill="#9d9d9d" />
        <path d="M5 7L20 2M12 11l8-9M15 14l5-12" fill="none" />
      </>
    ) : (
      <>
        <path d="M1 10h10v10H1z" />
        <path d="M1 10l4-4h11l-5 4z" fill="#dcdcdc" />
        <path d="M11 10l5-4v8l-5 6z" fill="#9d9d9d" />
        <path d="M5 6l6-5M16 6l6-4M16 14l6-5" fill="none" />
      </>
    )}
  </svg>
);

const toolbar = [
  {
    name: "Zoom to fit",
    icon: (
      <svg viewBox="0 0 22 22" className="size-5">
        <path d="M3 3h12v12H3z" fill="none" stroke="#7aa5c4" />
        <path d="M1 1h5v5H1zM13 1h5v5h-5zM1 13h5v5H1z" fill="#3f87bf" />
        <circle cx="10" cy="10" r="5.500" fill="#9ed0f0" stroke="#6ba4ca" />
        <path d="M15 15l6 5" stroke="#f0a32c" strokeWidth="3" />
      </svg>
    ),
  },
  "sep",
  { name: "View west", icon: <TargetIcon dir="left" /> },
  { name: "View north", icon: <TargetIcon dir="up" /> },
  { name: "View top", icon: <TargetIcon /> },
  { name: "View east", icon: <TargetIcon dir="right" /> },
  { name: "View south", icon: <TargetIcon dir="down" /> },
  { name: "XYZ", icon: <span className="font-['Liberation_Serif',serif] text-[9px] font-bold text-[#3c6b3c]">XYZ</span> },
  {
    name: "Section",
    muted: true,
    icon: (
      <svg viewBox="0 0 22 22" className="size-5" fill="none" stroke="#777">
        <path d="M2 4h18l-3 7H5zM7 15l4 3 4-3" />
        <path d="M11 6v12" strokeDasharray="2 1" />
      </svg>
    ),
  },
  "sep",
  { name: "Perspective", icon: <CubeIcon perspective />, on: true },
  { name: "Orthographic", icon: <CubeIcon /> },
  {
    name: "Ruler",
    muted: true,
    icon: (
      <svg viewBox="0 0 22 22" className="size-5" fill="none" stroke="#555">
        <path d="M1.500 5v9h19V5M5 14v-4M8.500 14v-4M12 14v-4M15.500 14v-4" strokeWidth="1.300" />
        <path d="M1 17h20" strokeDasharray="2 1.500" />
      </svg>
    ),
  },
  {
    name: "Grid",
    muted: true,
    icon: (
      <svg viewBox="0 0 22 22" className="size-5" fill="none" stroke="#b0b0b0">
        <path d="M1.500 3h19v16h-19zM8 3v16M14 3v16M1.500 8.500h19M1.500 14h19" strokeDasharray="2 1" />
      </svg>
    ),
  },
  "sep",
  {
    name: "Axes",
    on: true,
    icon: (
      <svg viewBox="0 0 22 22" className="size-5" fill="none">
        <path d="M5 3h16v14M5 7h16M5 11h16M5 15h16M9 3v15M13 3v15M17 3v15" stroke="#7b8ea0" strokeWidth=".8" />
        <path d="M2.500 19V2" stroke="#00d814" strokeWidth="2" />
        <path d="M2 19h19" stroke="#f02020" strokeWidth="2" />
        <path d="M3 18L14 8" stroke="#0010f0" strokeWidth="1.800" />
        <path d="M16 6l-5 1 3 4z" fill="#0010f0" />
      </svg>
    ),
  },
  {
    name: "Background",
    icon: (
      <svg viewBox="0 0 22 22" className="size-5">
        <path d="M1 12L11 4l7 6-8 9z" fill="#8595a5" stroke="#56626e" />
        <path d="M10 4l8 6-3 4-8-6z" fill="#adbac6" />
        <path d="M16 8V1M16 6c4 0 5 3 5 9" stroke="#2f7fc0" strokeWidth="2" fill="none" />
      </svg>
    ),
  },
  {
    name: "Colour scale",
    icon: (
      <svg viewBox="0 0 20 20" className="size-5">
        <defs>
          <linearGradient id="rainbow">
            <stop offset="0" stopColor="#00a0ff" />
            <stop offset=".25" stopColor="#00f040" />
            <stop offset=".5" stopColor="#f8f000" />
            <stop offset=".75" stopColor="#ff2000" />
            <stop offset="1" stopColor="#ff80ff" />
          </linearGradient>
        </defs>
        <path d="M0 2h20v17H0z" fill="url(#rainbow)" />
        <path d="M.5 4v14.500h19V4M5.500 18v-6M10 18V9M14.500 18v-6" fill="none" stroke="#000" strokeWidth="1.200" />
      </svg>
    ),
  },
  "scale",
  "sep",
  {
    name: "Screenshot",
    icon: (
      <svg viewBox="0 0 22 22" className="size-5">
        <path d="M1 6h20v12H1z" fill="#c2c2c2" stroke="#999" />
        <path d="M2 6h3v12H2z" fill="#888" />
        <path d="M9 4h7v2H9z" fill="#b0b0b0" />
        <circle cx="12.500" cy="12" r="5" fill="#5d9fe6" stroke="#dbe7f5" strokeWidth="1.300" />
      </svg>
    ),
  },
  {
    name: "Clip box",
    icon: (
      <svg viewBox="0 0 22 22" className="size-5" fill="none" stroke="#a632c8" strokeWidth="1.100">
        <path d="M1.500 5l11-3 8 2-1 10-10 5-6-5zM1.500 5l9 2 10-3M10.500 7l-1 12M12.500 2l-1 8M3.500 14l8-4 8 4M2.500 10l8 3 9-4" />
      </svg>
    ),
  },
  {
    name: "Snap",
    icon: (
      <svg viewBox="0 0 22 22" className="size-5" fill="none">
        <path d="M3 10l8-6c4-3 11 1 8 5l-8 8" stroke="#dd2c1c" strokeWidth="4.500" />
        <path d="M3 10l3-2.200M11 17l2.500-2.500" stroke="#c8c8c8" strokeWidth="4.500" />
        <circle cx="6" cy="16" r="5" fill="#18a4ee" />
      </svg>
    ),
  },
];

const ViewToolbar = () => (
  <div className="flex w-[38px] flex-col items-center gap-1 border-x-2 border-[#8a8d96] bg-[#f0f0f0] pt-1">
    {toolbar.map((t, i) => {
      if (t === "sep") return <hr key={i} className="w-8 border-[#a0a0a0]" />;
      if (t === "scale")
        return (
          <div key={i} className="w-7">
            <input aria-label="Vertical exaggeration" defaultValue="1.0" className="block h-[21px] w-full border-b border-[#868686] bg-white px-[2px] pb-1 font-['DejaVu_Sans',sans-serif] text-[10px]" />
            <div className="flex justify-between pt-px text-[10px] leading-3">
              <button className="h-[14px] w-[13px] rounded-[3px] border border-[#cfcfcf] bg-[#fdfdfd]">+</button>
              <button className="h-[14px] w-[13px] rounded-[3px] border border-[#cfcfcf] bg-[#fdfdfd]">-</button>
            </div>
          </div>
        );
      return (
        <button
          key={i}
          aria-label={t.name}
          className={clsx(
            "flex h-[26px] w-7 items-center justify-center rounded border",
            t.on && "border-[#0a64ad] bg-[#cce4f7]",
            t.muted && "border-[#e6e6e6] bg-[#f9f9f9]",
            !t.on && !t.muted && "border-[#cfcfcf] bg-[#fdfdfd]"
          )}
        >
          {t.icon}
        </button>
      );
    })}
  </div>
);

/* ---------- object details ---------- */

const Extent = ({ rows }) => (
  <div className="leading-[12px]">
    {rows.map(([axis, value]) => (
      <div key={axis} className="flex">
        <span className="w-4">{axis} :</span>
        {value}
      </div>
    ))}
  </div>
);

const Info = ({ label, className, children }) => (
  <div className={clsx("flex gap-[7px]", className)}>
    <span className="w-[91px] text-right leading-[14px]">{label} :</span>
    {children}
  </div>
);

const metadata = [
  ["background", "2000", "pl-[28px]"],
  ["overburden_...", "", "pl-[6px]", true],
  ["overbur...", "8000", "pl-[53px]"],
  ["thickness", "40", "pl-[53px]"],
  ["plate_model", "", "pl-[6px]", true],
  ["dip", "60", "pl-[53px]"],
];

const ObjectDetails = () => (
  <section className="border border-[#e3e3e3] p-px">
    <div className="grid grid-cols-[238px_minmax(0,1fr)_minmax(0,1fr)] border border-[#828790] pt-[11px] pr-3 pb-[10px] text-[10px]">
      <div>
        <Info label="Type">
          <span>Maxwell plate</span>
        </Info>
        <Info label="# Cell" className="mt-4">
          <span>1</span>
        </Info>
        <Info label="Painted data" className="mt-2">
          <span>-</span>
        </Info>
        <Info label="Extents" className="mt-2">
          <div className="flex items-center pt-[6px]">
            <Extent rows={[["X", "-323.61"], ["Y", "-319.65"], ["Z", "-322.31"]]} />
            <span className="ml-[21px] w-4">to</span>
            <div className="leading-[12px]">
              <div>403.26</div>
              <div>407.22</div>
              <div>-17.50</div>
            </div>
          </div>
        </Info>
        <Info label="Range" className="mt-5">
          <Extent rows={[["X", "726.86"], ["Y", "726.86"], ["Z", "304.81"]]} />
        </Info>
      </div>

      <div className="border-r border-[#a0a0a0]">
        <h3 className="mb-[7px] h-4 leading-4">Metadata</h3>
        <div className="flex gap-[2px] pr-[2px]">
          <div className={clsx("flex h-[160px] flex-1 overflow-hidden border border-[#828790] bg-white", segoe)}>
            <table className="h-fit flex-1 table-fixed border-collapse text-[14px]">
              <colgroup>
                <col className="w-[125px]" />
                <col />
              </colgroup>
              <thead>
                <tr className="h-[31px] text-left text-[12px]">
                  <th className="border-r border-[#e5e5e5] p-0 pl-[5px] font-normal">key</th>
                  <th className="border-r border-[#e5e5e5] p-0 pl-[5px] font-normal">value</th>
                </tr>
              </thead>
              <tbody>
                {metadata.map(([key, value, pad, open]) => (
                  <tr key={key} className="h-[22px]">
                    <td className={clsx("p-0 leading-[22px] whitespace-nowrap", pad)}>
                      <span className="flex items-center">
                        {open && <Chevron open className="mr-3" />}
                        {key}
                      </span>
                    </td>
                    <td className="p-0 pl-[3px] leading-[22px]">{value}</td>
                  </tr>
                ))}
              </tbody>
            </table>
            <div className="w-4 bg-[#f0f0f0] pt-[17px]">
              <div className="ml-[7px] h-[31px] w-px bg-[#868686]" />
            </div>
          </div>
          <div className="flex flex-col gap-[2px] pt-px">
            <SideButton label="Expand all"><FolderTreeIcon /></SideButton>
            <SideButton label="Clear"><FolderTreeIcon removed /></SideButton>
            <SideButton label="Save metadata"><SaveIcon /></SideButton>
            <SideButton label="Notes"><NotesIcon /></SideButton>
          </div>
        </div>
        <h3 className="mt-px flex h-7 items-center border-t border-[#a0a0a0]">
          <label htmlFor="comments">Comments</label>
        </h3>
        <div className="flex gap-[2px] pr-[2px]">
          <textarea id="comments" className="h-[160px] flex-1 resize-none border border-[#828790] bg-[#f0f0f0]" />
          <div className="flex flex-col gap-[2px] pt-px">
            <SideButton label="Add comment"><CommentIcon badge="add" className="h-[20px] w-[19px]" /></SideButton>
            <SideButton label="Remove comment"><CommentIcon badge="remove" className="h-[20px] w-[19px]" /></SideButton>
          </div>
        </div>
      </div>

      <div className="flex flex-col pl-1">
        <h3 className="mb-[7px] h-4 leading-4">Files</h3>
        <div className="flex flex-1 gap-[2px]">
          <div className={clsx("flex-1 border border-[#828790] bg-white", segoe)}>
            <table className="w-full table-fixed border-collapse text-[11px]">
              <colgroup>
                <col className="w-[300px]" />
                <col className="w-[125px]" />
                <col className="w-[125px]" />
                <col />
              </colgroup>
              <thead>
                <tr className="h-[31px] text-left">
                  <th className="relative border-r border-[#e5e5e5] p-0 pb-1 pl-[26px] font-normal">
                    Name
                    <svg viewBox="0 0 8 5" className="absolute top-px left-1/2 h-[5px] w-[8px]" fill="none">
                      <path d="M.5 .5L4 4 7.500 .5" stroke="#666" />
                    </svg>
                  </th>
                  <th className="border-r border-[#e5e5e5] p-0 pb-1 pl-[5px] font-normal">Size</th>
                  <th className="border-r border-[#e5e5e5] p-0 pb-1 pl-[5px] font-normal">Type</th>
                  <th className="border-r border-[#e5e5e5] p-0 pb-1 pl-[5px] font-normal">Date Modified</th>
                </tr>
              </thead>
            </table>
          </div>
          <div className="flex flex-col gap-[2px] pt-px">
            <SideButton label="Add file"><DocIcon badge="add" className="h-[20px] w-[19px]" /></SideButton>
            <SideButton label="Remove file"><DocIcon badge="remove" className="h-[20px] w-[19px]" /></SideButton>
            <SideButton label="Save file"><SaveIcon /></SideButton>
            <SideButton label="Import file"><ImportIcon /></SideButton>
          </div>
        </div>
      </div>
    </div>
  </section>
);

const detailTab = "flex h-[26px] items-center border border-b-0 border-l-0 border-[#e3e3e3]";

const DetailTabs = () => (
  <div className="flex h-7 items-end pl-px text-[10px]">
    <button className={clsx(detailTab, "gap-[5px] border-l bg-[#f3f3f3] pr-3 pl-[9px]")}>
      <WorkspaceIcon />
      Workspace
    </button>
    <button aria-label="Empty" className={clsx(detailTab, "w-6 bg-[#eaeaea]")} />
    <button className={clsx(detailTab, "gap-[5px] bg-[#f3f3f3] pr-[10px] pl-3")}>
      <SimpegIcon />
      Plate Match
    </button>
    <button className={clsx(detailTab, "h-7 gap-[5px] bg-[#f9f9f9] pr-3 pl-3")}>
      <PlateIcon />
      Query [0]
    </button>
    <button className={clsx(detailTab, "bg-[#f3f3f3] px-[10px]")}>Cell</button>
    <button aria-label="Empty" className={clsx(detailTab, "w-6 bg-[#eaeaea]")} />
    <button aria-label="Empty" className={clsx(detailTab, "w-[23px] bg-[#eaeaea]")} />
  </div>
);

/* ---------- plate match dialog ---------- */

const Field = ({ label, id, check, children }) => (
  <div className="flex items-center gap-[10px]">
    <div className="flex w-[131px] items-center justify-end gap-[6px]">
      {check && <Check checked label={`Use ${label}`} />}
      <label htmlFor={id} className="whitespace-nowrap">
        {label} :
      </label>
    </div>
    {children}
  </div>
);

const PlateMatchDialog = () => (
  <div
    role="dialog"
    aria-label="Plate Match"
    className="absolute top-[313px] left-[334px] w-[520px] rounded-lg border border-[#a8a8a8] bg-[#f0f0f0] pb-[13px] text-[10px] shadow-[0_24px_48px_rgba(0,0,0,0.45)]"
  >
    <header className={clsx("flex h-7 items-center rounded-t-lg bg-[#f3f3f3] pr-[8px] pl-[7px] text-[11px]", segoe)}>
      <AppLogo className="size-4" />
      <span className="ml-[5px] flex-1">Plate Match: Plate Match(2)</span>
      <button aria-label="Close">
        <svg viewBox="0 0 12 12" className="size-3" stroke="#222">
          <path d="M1 1l10 10M11 1L1 11" />
        </svg>
      </button>
    </header>
    <div className="px-3">
      <div className="mt-[14px] flex h-[288px] overflow-hidden">
        <div className="flex w-[476px] shrink-0 flex-col">
          <div className="flex h-5 items-end">
            <button className="relative z-10 -mb-px h-[21px] border border-b-0 border-[#e2e2e2] bg-[#f9f9f9] px-[10px]">General parameters</button>
            <button className="h-[17px] border border-b-0 border-l-0 border-[#e2e2e2] bg-[#f3f3f3] px-[9px]">Advanced parameters</button>
          </div>
          <div className="flex flex-col gap-[2px] border border-[#e2e2e2] bg-[#f9f9f9] px-3 pt-[15px]">
            <Field label="Survey" id="survey">
              <Combo id="survey" value="survey" icon="rx" className="h-7 flex-1" />
              <span className="-ml-[2px] pr-px">
                <PickButton />
              </span>
            </Field>
            <Field label="EM Data" id="em-data">
              <Combo id="em-data" value="" className="h-[25px] flex-1" />
            </Field>
            <Field label="Query Points" id="query-points">
              <Combo id="query-points" value="Points" icon="points" className="h-7 flex-1" />
              <span className="-ml-[2px] pr-px">
                <PickButton />
              </span>
            </Field>
            <Field label="Query Max Distance (m)" id="max-distance">
              <input id="max-distance" placeholder="1000" className="h-[23px] min-w-0 flex-1 rounded-[2px] border border-[#ececec] border-b-[#868686] bg-white px-[2px] outline-none placeholder:text-[#757575]" />
            </Field>
            <Field label="Strike Angles (degrees)" id="strike" check>
              <Combo id="strike" value="strike" icon="pi" className="h-[25px] flex-1" />
            </Field>
            <Group title="Topography" className="flex flex-col gap-[7px] pt-[10px] pr-[11px] pb-3">
              <div className="flex items-center">
                <label htmlFor="topography" className="mr-[11px] w-[111px] text-right">
                  Topography :
                </label>
                <Combo id="topography" value="topography" icon="triangle" className="mr-2 h-7 flex-1" />
                <PickButton />
              </div>
              <div className="flex items-center">
                <div className="mr-[11px] flex w-[111px] items-center justify-end gap-[2px]">
                  <Check label="Use elevation channel" />
                  <label htmlFor="elevation">Elevation channel :</label>
                </div>
                <Combo id="elevation" value="" disabled className="h-[19px] flex-1" />
              </div>
            </Group>
            <Field label="Simulations directory" id="sim-dir">
              <div className="flex h-[24px] flex-1 items-center border border-[#e2e6ee] bg-white pl-[2px]">
                <input id="sim-dir" defaultValue="./simulations" className="[field-sizing:content] outline-none" />
                <span className="h-3 w-px bg-black" />
              </div>
            </Field>
          </div>
        </div>
        <div className="ml-[2px] w-px bg-white" />
        <div className="mt-[17px] ml-[6px] h-[238px] w-px bg-[#868686]" />
      </div>
      <hr className="mt-[26px] border-[#a0a0a0]" />
      <div className="mt-[10px] mr-px flex items-center justify-end gap-[9px] text-[10px]">
        <button className="h-[21px] w-[73px] rounded border border-[#0067c0] bg-[#fdfdfd]">OK</button>
        <button className="h-[21px] w-[73px] rounded border border-[#cfcfcf] bg-[#fdfdfd]">Cancel</button>
        <button className="h-[21px] w-[73px] rounded border border-[#cfcfcf] bg-[#fdfdfd]">Apply</button>
        <button aria-label="Help" className="flex h-[26px] w-[30px] items-center justify-center rounded border border-[#cfcfcf] bg-[#fdfdfd]">
          <span className="flex size-5 items-center justify-center rounded-full border border-[#2a6bab] bg-[#3f8ed6] text-[13px] font-bold text-white">?</span>
        </button>
      </div>
    </div>
  </div>
);

/* ---------- window ---------- */

const menus = ["File", "Utilities", "Drillholes", "Geophysics", "Geology", "Panels", "Views", "Python", "Help"];

const App = () => (
  <div className={clsx("relative flex h-screen flex-col overflow-hidden bg-[#f0f0f0] text-black", tahoma)}>
    <header className={clsx("flex h-[23px] shrink-0 items-center bg-[#f3f3f3] pl-[2px] text-[#8a8a8a]", segoe)}>
      <AppLogo className="size-4" />
      <h1 className="ml-[6px] flex-1 text-[11px]">
        Geoscience ANALYST Pro Geology and Geophysics 4.7.1 - C:\Users\dominiquef\AppData\Local\Temp\pytest-of-dominiquef\pytest-702\test_matching_driver0\tests.plate_simulation.runtest.match_test.geoh5
      </h1>
      <div className="flex">
        {["M1 6h10", "M1 3h7v7H1zM3 1h5q2 0 2 2v5", "M1 1l10 10M11 1L1 11"].map((d, i) => (
          <button key={d} aria-label={["Minimize", "Restore", "Close"][i]} className="flex w-[46px] justify-center">
            <svg viewBox="0 0 12 12" className="size-[11px]" fill="none" stroke="#8a8a8a">
              <path d={d} />
            </svg>
          </button>
        ))}
      </div>
    </header>
    <nav className={clsx("flex h-[20px] shrink-0 items-center gap-4 bg-white pl-2 text-[11px] text-[#8a8a8a]", segoe)}>
      {menus.map((m) => (
        <button key={m}>{m}</button>
      ))}
    </nav>

    <main className="flex min-h-0 flex-1 gap-[5px] pt-px">
      <div className="flex w-[605px] shrink-0 flex-col gap-[6px]">
        <ObjectsPanel />
        <VisualParameters />
      </div>

      <div className="flex min-w-0 flex-1 flex-col">
        <DockHeader title="Viewport" active />
        <div className="mt-px mr-px ml-px flex min-h-0 flex-1 border-b border-[#9b9b9b]">
          <div className="relative min-w-0 flex-1 overflow-hidden bg-white">
            <Scene />
            <Brand />
          </div>
          <ViewToolbar />
        </div>
        <div className="flex h-6 items-start pl-px text-[10px]">
          <button className="-mt-px h-5 border border-t-0 border-[#e5e5e5] bg-[#f9f9f9] px-[11px]">Viewport</button>
          <button className="h-[17px] border-b border-[#e3e3e3] bg-[#f3f3f3] px-[11px]">2D Profile Viewer</button>
        </div>
        <div className="mr-[4px] mb-1 ml-[2px]">
          <DetailTabs />
          <ObjectDetails />
        </div>
      </div>
    </main>

    <footer className={clsx("flex h-[20px] shrink-0 items-center gap-2 pl-[6px] text-[11px]", segoe)}>
      <span>Pick : X : 0.000, Y : 0.000, Z : 0.000 |</span>
      <span>●</span>
      <span>Camera Dip : 21.050, DipDir : 354.400</span>
      <span>●</span>
      <span>X : -817.641, Y : -48.776, Z : -105.415</span>
    </footer>

    <PlateMatchDialog />
  </div>
);

export default App;
